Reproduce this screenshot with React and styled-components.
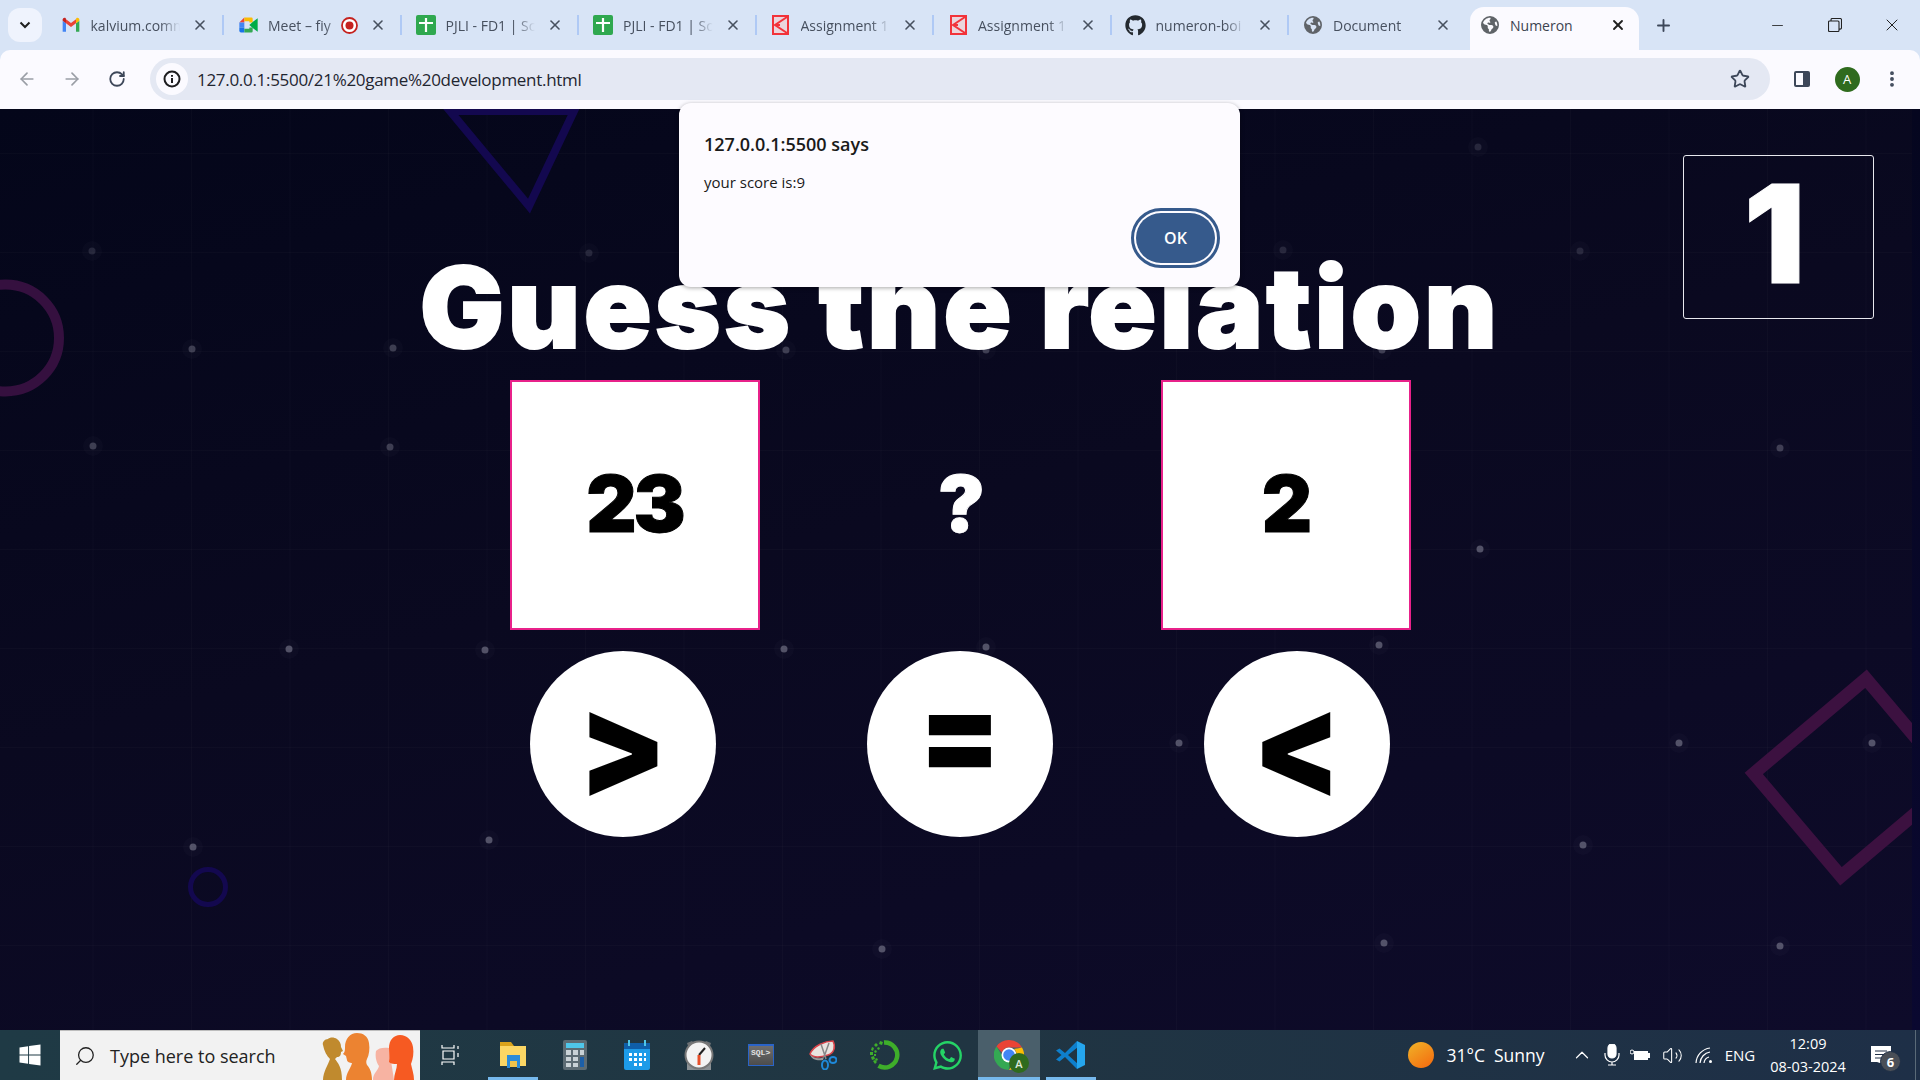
import styled, { createGlobalStyle } from "styled-components"
import { ArrowLeft, ArrowRight, RotateCw, Star, EllipsisVertical, X, Plus, Minus, Search, ChevronUp, Volume2 } from "lucide-react"
import { FaGithub, FaWindows, FaWhatsapp } from "react-icons/fa"
import { FaEarthAmericas } from "react-icons/fa6"

const GlobalStyle = createGlobalStyle`
    html, body {
        margin: 0;
        padding: 0;
        width: 1920px;
        height: 1080px;
        overflow: hidden;
        font-family: "Open Sans", "Noto Sans", sans-serif;
    }
    * { box-sizing: border-box; }
`

const GmailIcon = () => (
    <svg width="20" height="20" viewBox="0 0 24 24">
        <path fill="#4285F4" d="M2 20h4V10L2 7z" />
        <path fill="#34A853" d="M18 20h4V7l-4 3z" />
        <path fill="#EA4335" d="M6 10V5l6 4.5L18 5v5l-6 4.5z" />
        <path fill="#FBBC04" d="M18 5v5l4-3V5.5C22 3.6 19.8 2.5 18.3 3.8z" />
        <path fill="#C5221F" d="M2 7l4 3V5L5.7 3.8C4.2 2.5 2 3.6 2 5.5z" />
    </svg>
)

const MeetIcon = () => (
    <svg width="21" height="20" viewBox="0 0 24 24">
        <path fill="#EA4335" d="M7 3L1 9h6z" />
        <path fill="#FBBC04" d="M7 3h8.5A1.5 1.5 0 0 1 17 4.500V9h-4V7.500H7z" />
        <path fill="#4285F4" d="M1 9h6v6H1z" />
        <path fill="#1A73E8" d="M1 15h6v6H3a2 2 0 0 1-2-2z" />
        <path fill="#34A853" d="M7 21v-4.500h6V15h4v4.500a1.500 1.500 0 0 1-1.500 1.500z" />
        <path fill="#00AC47" d="M13 12l4-3.500 6-4.500v16l-6-4.500z" />
    </svg>
)

const SheetIcon = () => (
    <svg width="20" height="20" viewBox="0 0 20 20">
        <rect width="20" height="20" rx="2" fill="#2FA84F" />
        <path d="M3 8h14M10 3v14" stroke="#fff" strokeWidth="2.200" />
    </svg>
)

const KalviumIcon = () => (
    <svg width="17" height="20" viewBox="0 0 17 20">
        <rect x="1" y="1" width="15" height="18" fill="#EBD5DC" stroke="#F2333A" strokeWidth="2" />
        <path d="M15 2L3 10l12 8M3 10h5" fill="none" stroke="#F2333A" strokeWidth="2" />
    </svg>
)

const RecIcon = () => (
    <svg width="17" height="17" viewBox="0 0 17 17">
        <circle cx="8.500" cy="8.500" r="7.500" fill="#fff" stroke="#C5221F" strokeWidth="1.800" />
        <circle cx="8.500" cy="8.500" r="4" fill="#C5221F" />
    </svg>
)

const tabs = [
    { title: "kalvium.comm", icon: <GmailIcon /> },
    { title: "Meet – fiy", icon: <MeetIcon />, rec: true },
    { title: "PJLI - FD1 | Sc", icon: <SheetIcon /> },
    { title: "PJLI - FD1 | Sc", icon: <SheetIcon /> },
    { title: "Assignment 1", icon: <KalviumIcon /> },
    { title: "Assignment 1", icon: <KalviumIcon /> },
    { title: "numeron-boi", icon: <FaGithub size={21} color="#24292f" /> },
    { title: "Document", icon: <FaEarthAmericas size={18} color="#5f6368" />, noSep: true },
    { title: "Numeron", icon: <FaEarthAmericas size={18} color="#5f6368" />, active: true },
]

const dots = [
    [92, 251], [589, 253], [1283, 250], [1580, 251], [1478, 147], [192, 349], [393, 348], [786, 350], [986, 350], [1382, 350],
    [93, 446], [390, 447], [1780, 448], [1480, 549], [289, 649], [485, 650], [784, 649], [986, 647], [1379, 645],
    [1179, 743], [1679, 743], [1872, 743], [193, 847], [489, 840], [1583, 845], [882, 949], [1384, 943], [1780, 946],
]

const RestoreIcon = () => (
    <svg width="14" height="14" viewBox="0 0 14 14" fill="none" stroke="#222" strokeWidth="1.100">
        <rect x="0.500" y="3" width="10.500" height="10.500" rx="1" />
        <path d="M3 3V1.800A1.300 1.300 0 0 1 4.300 0.500h8A1.300 1.300 0 0 1 13.500 1.800v8a1.300 1.300 0 0 1-1.300 1.300H11" />
    </svg>
)

const PanelIcon = () => (
    <svg width="18" height="18" viewBox="0 0 18 18">
        <rect x="1" y="1" width="16" height="16" rx="2" fill="#3D4759" />
        <rect x="3" y="3" width="7" height="12" fill="#FBFAFF" />
    </svg>
)

const InfoIcon = () => (
    <svg width="18" height="18" viewBox="0 0 18 18">
        <circle cx="9" cy="9" r="7.500" fill="none" stroke="#1d1d1f" strokeWidth="2" />
        <path d="M9 8v5M9 5v1.800" stroke="#1d1d1f" strokeWidth="2" />
    </svg>
)

const People = () => (
    <svg width="98" height="47" viewBox="0 0 98 47">
        <path fill="#C08A2E" d="M3 12c-1-3 2-6 5-6 2-2 6-2 9 0 3 2 4 5 4 8l2 4-2 1c0 3-1 5-4 5l-2 2c3 4 7 8 7 21H3c0-8 5-15 7-21-3-3-6-8-7-14z" />
        <path fill="#F7B3A2" d="M56 18c2-3 8-4 13-3l5 32H53c0-7 5-9 6-14-3-4-4-10-3-15z" />
        <path fill="#EC8331" d="M25 14c0-8 5-14 12-14 6 0 11 3 12 10 1 6 0 12-2 16-1 2-1 4 0 6 3 3 5 8 5 15H26c0-7 5-12 6-17-2 0-5-1-5-3l-1-4-3-2c2-2 2-4 2-7z" />
        <path fill="#F65A22" d="M69 15c0-8 5-13 11-13 7 0 12 5 13 12 1 6 0 12-2 17 1 5 3 10 3 16H74c0-6 3-11 3-16-3 0-6 0-8-2 1-5 0-9 0-14z" />
    </svg>
)

const FolderIcon = () => (
    <svg width="28" height="30" viewBox="0 0 28 30">
        <path fill="#D9A21B" d="M1 2h11l3 4h12v6H1z" />
        <path fill="#FBD664" d="M1 6h26v20H1z" />
        <path fill="#2B8BD8" d="M8 15h13v13h-3v-7h-7v7H8z" />
        <path fill="#F1C34A" d="M11 21h7v6h-7z" />
    </svg>
)

const CalcIcon = () => (
    <svg width="24" height="30" viewBox="0 0 24 30">
        <rect width="24" height="30" rx="2" fill="#5C6B73" />
        <rect x="3" y="3" width="18" height="5" fill="#4FC6E9" />
        <path fill="#C9D2D6" d="M3 10h5v5H3zM10 10h5v5h-5zM17 10h4v5h-4zM3 17h5v4H3zM10 17h5v4h-5zM3 23h5v4H3zM10 23h5v4h-5z" />
        <rect x="17" y="17" width="4" height="10" fill="#1C5FA8" />
    </svg>
)

const CalendarIcon = () => (
    <svg width="26" height="30" viewBox="0 0 26 30">
        <path fill="#1D9BE8" d="M0 9h26v19a2 2 0 0 1-2 2H2a2 2 0 0 1-2-2z" />
        <path fill="#0F5EA8" d="M0 3h26v6H0z" />
        <path fill="#4FC6E9" d="M4 0h2v6H4zM20 0h2v6h-2z" />
        <path fill="#fff" d="M5 13h3v3H5zM10 13h3v3h-3zM15 13h3v3h-3zM20 13h2v3h-2zM5 18h3v3H5zM10 18h3v3h-3zM15 18h3v3h-3zM20 18h2v3h-2zM10 23h3v3h-3zM15 23h3v3h-3z" />
    </svg>
)

const ClockIcon = () => (
    <svg width="30" height="30" viewBox="0 0 30 30">
        <path fill="#6b7074" d="M3 3l5-2 3 3-6 5zM27 3l-5-2-3 3 6 5z" />
        <path fill="#8a9094" d="M3 18h24v12H3z" />
        <circle cx="15" cy="15" r="13.500" fill="#F3F3F3" stroke="#777" strokeWidth="2" />
        <path d="M15 15l6-7" stroke="#222" strokeWidth="2" />
        <path d="M15 15v10" stroke="#E8502A" strokeWidth="3" />
    </svg>
)

const SqlIcon = () => (
    <SqlBox>SQL&gt;</SqlBox>
)

const SnipIcon = () => (
    <svg width="28" height="30" viewBox="0 0 28 30">
        <path fill="#E9E4DF" stroke="#D9444A" strokeWidth="1.500" d="M1 14C4 6 16 1 24 1c3 6 1 12-5 14S5 19 1 14z" />
        <path fill="#9a9a9a" d="M1 14c3 5 10 5 14 3l-1 3c-5 1-12 0-13-6z" />
        <path d="M12 4l5 15M20 3l-5 14" stroke="#888" strokeWidth="1.500" />
        <ellipse cx="16" cy="25" rx="3" ry="4.500" fill="none" stroke="#1E88D9" strokeWidth="2" />
        <ellipse cx="24" cy="20" rx="3.500" ry="3" fill="none" stroke="#1E88D9" strokeWidth="2" />
    </svg>
)

const RingIcon = () => (
    <svg width="30" height="30" viewBox="0 0 30 30">
        <path d="M14 2.500a12.500 12.500 0 1 1-5.500 23.300" fill="none" stroke="#3EAE2A" strokeWidth="4.500" />
        <path fill="#3EAE2A" d="M10 1l3 1-1 3-3-1zM6 3l2 2-2 2-2-2zM8 7l2 1-1 2-2-1zM2 7l2 1-1 3-2-1zM5 10l2 1-1 2-2-1zM0 12l3 0v3H0zM4 14l2 0v2H4zM1 17l3-1 1 3-3 1zM6 18l2 1-1 2-2-1zM3 21l2-1 2 2-2 2z" />
    </svg>
)

const CodeIcon = () => (
    <svg width="30" height="30" viewBox="0 0 30 30">
        <path fill="#0E7FCC" d="M21 1L9 13 3.500 8.500 0 10.500 5.500 15 0 19.500l3.500 2L9 17l12 12 1-5-10-9 10-8z" />
        <path fill="#25A6EE" d="M21 1l8 4v20l-8 4z" />
    </svg>
)

const ChromeIcon = () => (
    <ChromeWrap>
        <svg width="30" height="30" viewBox="0 0 30 30">
            <path fill="#EA4335" d="M15 0a15 15 0 0 1 13 7.500H15a7.500 7.500 0 0 0-7 5L2.500 6.500A15 15 0 0 1 15 0z" />
            <path fill="#FBBC04" d="M28 7.500A15 15 0 0 1 15 30l6.500-11.200A7.500 7.500 0 0 0 20 9z" />
            <path fill="#34A853" d="M2.500 6.500L8 15.500a7.500 7.500 0 0 0 9 6L14.500 30A15 15 0 0 1 2.500 6.500z" />
            <circle cx="15" cy="15" r="7.500" fill="#fff" />
            <circle cx="15" cy="15" r="5.800" fill="#4285F4" />
        </svg>
        <ChromeBadge>A</ChromeBadge>
    </ChromeWrap>
)

const taskItems = [
    { key: "view", icon: <svg width="20" height="20" viewBox="0 0 20 20" fill="none" stroke="#fff" strokeWidth="1.200"><path d="M1 0v3h12V0M1 20v-3h12v3M2 6h11v8H2zM17 1v3M17 8v4" /></svg> },
    { key: "files", icon: <FolderIcon />, line: true },
    { key: "calc", icon: <CalcIcon /> },
    { key: "cal", icon: <CalendarIcon /> },
    { key: "clock", icon: <ClockIcon /> },
    { key: "sql", icon: <SqlIcon /> },
    { key: "snip", icon: <SnipIcon /> },
    { key: "ring", icon: <RingIcon /> },
    { key: "whatsapp", icon: <FaWhatsapp size={33} color="#25D366" /> },
    { key: "chrome", icon: <ChromeIcon />, line: true, active: true },
    { key: "code", icon: <CodeIcon />, line: true },
]

export default function App() {
    return (
        <>
            <GlobalStyle />
            <Screen>
                <TabStrip>
                    <TabSearch><ChevronIcon /></TabSearch>
                    {tabs.map((tab, i) => (
                        <Tab key={i} $active={tab.active} $noSep={tab.noSep}>
                            <Favicon>{tab.icon}</Favicon>
                            <TabTitle $active={tab.active}>{tab.title}</TabTitle>
                            {tab.rec && <RecIcon />}
                            <TabClose><X size={16} strokeWidth={tab.active ? 2.8 : 2.4} color={tab.active ? "#1f1f1f" : "#47505f"} /></TabClose>
                        </Tab>
                    ))}
                    <NewTab><Plus size={19} strokeWidth={2.4} color="#3d4759" /></NewTab>
                    <WindowControls>
                        <WindowButton><Minus size={17} strokeWidth={1.2} color="#222" /></WindowButton>
                        <WindowButton><RestoreIcon /></WindowButton>
                        <WindowButton><X size={20} strokeWidth={1.2} color="#222" /></WindowButton>
                    </WindowControls>
                </TabStrip>
                <Toolbar>
                    <NavButton><ArrowLeft size={20} color="#9a9ea6" /></NavButton>
                    <NavButton><ArrowRight size={20} color="#9a9ea6" /></NavButton>
                    <NavButton><RotateCw size={18} strokeWidth={2.4} color="#3d4759" /></NavButton>
                    <Omnibox>
                        <InfoChip><InfoIcon /></InfoChip>
                        <Url>127.0.0.1:5500/21%20game%20development.html</Url>
                        <StarSlot><Star size={20} strokeWidth={2.2} color="#3d4759" /></StarSlot>
                    </Omnibox>
                    <ToolActions>
                        <NavButton><PanelIcon /></NavButton>
                        <NavButton><Avatar>A</Avatar></NavButton>
                        <NavButton><EllipsisVertical size={20} strokeWidth={2.6} color="#3d4759" /></NavButton>
                    </ToolActions>
                </Toolbar>

                <Page>
                    <Backdrop width="1920" height="922" viewBox="0 108 1920 922">
                        <polygon points="450,111 574,111 529,206" fill="none" stroke="#13084f" strokeWidth="8" />
                        <circle cx="5.500" cy="338" r="53.500" fill="none" stroke="#35103f" strokeWidth="10" />
                        <circle cx="208" cy="887" r="17.500" fill="none" stroke="#13084f" strokeWidth="5" />
                        <polygon points="1866,678.700 1753.800,773.400 1841,876.300 1953,781.600" fill="none" stroke="#3c1140" strokeWidth="13" />
                        {dots.map(([x, y], i) => (
                            <g key={i}>
                                <circle cx={x} cy={y} r="10" fill="#ffffff" opacity="0.02" />
                                <circle cx={x} cy={y} r="3.500" fill="#8a8a9c" opacity={y < 300 ? 0.22 : y < 460 ? 0.4 : 0.55} />
                            </g>
                        ))}
                    </Backdrop>
                    <EdgeStrip />

                    <Heading>
                        <Title>Guess the relation</Title>
                        <ScoreBox>1</ScoreBox>
                    </Heading>
                    <NumberRow>
                        <NumberCard>23</NumberCard>
                        <Mystery>?</Mystery>
                        <NumberCard>2</NumberCard>
                    </NumberRow>
                    <ChoiceRow>
                        <Choice><Glyph $sx={1.09} $sy={1.2}>&gt;</Glyph></Choice>
                        <Choice><Glyph $sy={1.08} $dy={-11}>=</Glyph></Choice>
                        <Choice><Glyph $sx={1.09} $sy={1.2}>&lt;</Glyph></Choice>
                    </ChoiceRow>
                </Page>

                <AlertBox>
                    <AlertTitle>127.0.0.1:5500 says</AlertTitle>
                    <AlertMessage>your score is:9</AlertMessage>
                    <AlertActions><OkButton>OK</OkButton></AlertActions>
                </AlertBox>

                <Taskbar>
                    <StartButton><FaWindows size={24} color="#fff" /></StartButton>
                    <SearchBox>
                        <SearchGlass><Search size={22} strokeWidth={1.4} color="#222" /></SearchGlass>
                        <SearchText>Type here to search</SearchText>
                        <PeopleSlot><People /></PeopleSlot>
                    </SearchBox>
                    {taskItems.map((item) => (
                        <TaskButton key={item.key} $line={item.line} $active={item.active}>{item.icon}</TaskButton>
                    ))}
                    <Tray>
                        <Sun />
                        <TrayText $w={47.500}>31°C</TrayText>
                        <TrayText $w={72}>Sunny</TrayText>
                        <TraySlot $w={32}><ChevronUp size={22} strokeWidth={1.3} color="#fff" /></TraySlot>
                        <TraySlot $w={28}>
                            <svg width="16" height="22" viewBox="0 0 16 22" fill="none" stroke="#fff" strokeWidth="1.200"><rect x="4" y="0" width="8" height="14" rx="4" fill="#fff" /><path d="M1 9v2a7 7 0 0 0 14 0V9M8 18v3M4 21h8" /></svg>
                        </TraySlot>
                        <TraySlot $w={28}>
                            <svg width="20" height="12" viewBox="0 0 20 12"><rect x="4" y="2" width="14" height="9" fill="#fff" /><rect x="18" y="4" width="2" height="5" fill="#fff" /><circle cx="2" cy="3" r="2" fill="none" stroke="#fff" /></svg>
                        </TraySlot>
                        <TraySlot $w={36}><Volume2 size={21} strokeWidth={1.200} color="#fff" /></TraySlot>
                        <TraySlot $w={28}>
                            <svg width="18" height="18" viewBox="0 0 18 18" fill="none" stroke="#fff" strokeWidth="1.200"><path d="M1 17A16 16 0 0 1 15 2M5 17A12 12 0 0 1 15 6M9 17a7 7 0 0 1 5-6" /><circle cx="15.500" cy="15.500" r="1.500" fill="#fff" stroke="none" /></svg>
                        </TraySlot>
                        <TrayText $w={44} $small>ENG</TrayText>
                        <Clock>
                            <span>12:09</span>
                            <span>08-03-2024</span>
                        </Clock>
                        <NotifySlot>
                            <svg width="20" height="18" viewBox="0 0 20 18"><path fill="#fff" d="M0 0h20v17H9l-3-1H0z" /><path d="M4 5h12M4 8.500h12M4 12h8" stroke="#1f2f46" strokeWidth="1.200" /></svg>
                            <NotifyBadge>6</NotifyBadge>
                        </NotifySlot>
                        <DesktopEdge />
                    </Tray>
                </Taskbar>
            </Screen>
        </>
    )
}

const ChevronIcon = () => (
    <svg width="12" height="8" viewBox="0 0 12 8"><path d="M1.500 1.500L6 6l4.500-4.500" fill="none" stroke="#1f1f1f" strokeWidth="2" /></svg>
)

const Screen = styled.div`
    position: relative;
    width: 1920px;
    height: 1080px;
    display: flex;
    flex-direction: column;
    overflow: hidden;
    background-color: #D8E4F6;
`

const TabStrip = styled.div`
    height: 50px;
    flex: none;
    display: flex;
    align-items: flex-end;
    padding-left: 8px;
    color: #47505f;
`

const TabSearch = styled.div`
    width: 34px;
    height: 34px;
    margin: 0 4.500px 8px 0;
    display: flex;
    align-items: center;
    justify-content: center;
    border-radius: 12px;
    background-color: #EFF3FD;
`

const Tab = styled.div`
    position: relative;
    flex: none;
    width: ${(p) => (p.$active ? "169px" : "177.500px")};
    height: 43px;
    margin-left: ${(p) => (p.$active ? "3.500px" : "0")};
    padding: ${(p) => (p.$active ? "0 13px 7px 8px" : "0 16px 7px 12px")};
    display: flex;
    align-items: center;
    border-radius: 14px 14px 0 0;
    background-color: ${(p) => (p.$active ? "#FBFAFF" : "transparent")};

    &::after {
        content: "";
        display: ${(p) => (p.$active || p.$noSep ? "none" : "block")};
        position: absolute;
        right: 0;
        top: 8px;
        width: 2px;
        height: 20px;
        background-color: #AFC9F5;
    }
`

const Favicon = styled.span`
    flex: none;
    width: 24px;
    margin-right: 8px;
    display: flex;
    align-items: center;
    justify-content: center;
`

const TabTitle = styled.span`
    flex: 1;
    min-width: 0;
    white-space: nowrap;
    overflow: hidden;
    font-size: 14px;
    color: ${(p) => (p.$active ? "#3c4350" : "#47505f")};
    mask-image: ${(p) => (p.$active ? "none" : "linear-gradient(to right, #000 78%, transparent 100%)")};
`

const TabClose = styled.span`
    flex: none;
    width: 16px;
    margin-left: 12px;
    display: flex;
`

const NewTab = styled.div`
    width: 24px;
    height: 50px;
    margin-left: 12px;
    display: flex;
    align-items: center;
    justify-content: center;
`

const WindowControls = styled.div`
    height: 50px;
    margin-left: auto;
    display: flex;
`

const WindowButton = styled.div`
    width: 57px;
    display: flex;
    align-items: center;
    justify-content: center;
`

const Toolbar = styled.div`
    height: 59px;
    flex: none;
    display: flex;
    align-items: center;
    padding: 0 0 1px 4.500px;
    background-color: #FBFAFF;
    border-radius: 10px 10px 0 0;
`

const NavButton = styled.div`
    width: 45px;
    display: flex;
    align-items: center;
    justify-content: center;
`

const Omnibox = styled.div`
    width: 1620px;
    height: 42px;
    margin-left: 10.500px;
    padding: 0 20px 0 6px;
    display: flex;
    align-items: center;
    border-radius: 21px;
    background-color: #E4E8F3;
`

const InfoChip = styled.div`
    width: 32px;
    height: 32px;
    display: flex;
    align-items: center;
    justify-content: center;
    border-radius: 50%;
    background-color: #FBFAFF;
`

const Url = styled.span`
    margin-left: 9px;
    font-size: 17px;
    color: #1f2530;
    letter-spacing: -0.3px;
`

const StarSlot = styled.span`
    margin-left: auto;
    display: flex;
`

const ToolActions = styled.div`
    margin-left: 9.500px;
    display: flex;
`

const Avatar = styled.div`
    width: 25px;
    height: 25px;
    display: flex;
    align-items: center;
    justify-content: center;
    border-radius: 50%;
    background-color: #2F6B1E;
    color: #fff;
    font-size: 13px;
`

const Page = styled.main`
    position: relative;
    flex: none;
    width: 1920px;
    height: 921px;
    padding-top: 46px;
    overflow: hidden;
    background-color: #0b0a26;
    background-image:
        linear-gradient(rgba(255, 255, 255, 0.018) 1px, transparent 1px),
        linear-gradient(90deg, rgba(255, 255, 255, 0.018) 1px, transparent 1px),
        linear-gradient(165deg, #04061a 0%, #0a0920 45%, #0e0b2a 100%);
    background-size: 98.500px 99px, 98.500px 99px, 100% 100%;
    background-position: -6px 44px, -6px 44px, 0 0;
`

const Backdrop = styled.svg`
    position: absolute;
    top: -1px;
    left: 0;
`

const EdgeStrip = styled.div`
    position: absolute;
    top: 0;
    right: 0;
    width: 8px;
    height: 100%;
    background: linear-gradient(#05061f, #0a0830);
`

const Heading = styled.header`
    position: relative;
    height: 225px;
    display: grid;
    grid-template-columns: 1fr auto 1fr;
`

const Title = styled.h1`
    grid-column: 2;
    align-self: end;
    margin: 0 0 17px;
    font-family: Inter, "Liberation Sans", sans-serif;
    font-size: 112px;
    line-height: 112px;
    font-weight: 900;
    letter-spacing: 3.300px;
    -webkit-text-stroke: 2px #fff;
    color: #fff;
    white-space: nowrap;
`

const ScoreBox = styled.div`
    grid-column: 3;
    justify-self: end;
    align-self: start;
    width: 191px;
    height: 164px;
    margin-right: 46px;
    padding: 0 8px 8px 0;
    display: flex;
    align-items: center;
    justify-content: center;
    border: 1.500px solid #E8E8EE;
    border-radius: 3px;
    font-family: Inter, "Liberation Sans", sans-serif;
    font-size: 136px;
    font-weight: 900;
    -webkit-text-stroke: 1px #fff;
    color: #fff;
`

const NumberRow = styled.div`
    display: flex;
    justify-content: center;
    gap: 75.500px;
`

const NumberCard = styled.div`
    width: 250px;
    height: 250px;
    padding-bottom: 3px;
    display: flex;
    align-items: center;
    justify-content: center;
    border: 2.500px solid #E8218A;
    background-color: #fff;
    color: #000;
    font-family: Inter, "Liberation Sans", sans-serif;
    font-size: 78px;
    font-weight: 900;
    letter-spacing: -3px;
    -webkit-text-stroke: 1px currentColor;
`

const Mystery = styled(NumberCard)`
    border: none;
    background: none;
    color: #fff;
`

const ChoiceRow = styled.div`
    margin-top: 21px;
    display: flex;
    justify-content: center;
    gap: 151px;
`

const Choice = styled.div`
    width: 186px;
    height: 186px;
    display: flex;
    align-items: center;
    justify-content: center;
    border-radius: 50%;
    background-color: #fff;
    color: #000;
    font-family: Inter, "Liberation Sans", sans-serif;
    font-size: 118px;
    font-weight: 900;
`

const Glyph = styled.span`
    display: block;
    transform: translateY(${(p) => p.$dy || 0}px) scale(${(p) => p.$sx || 1}, ${(p) => p.$sy || 1});
`

const AlertBox = styled.div`
    position: absolute;
    top: 103px;
    left: 679px;
    width: 561px;
    height: 184px;
    padding: 29px 21px 20px 25px;
    display: flex;
    flex-direction: column;
    border-radius: 12px;
    background-color: #FDFBFF;
    box-shadow: 0 1px 4px rgba(0, 0, 0, 0.35);
    color: #1a1a1a;
`

const AlertTitle = styled.div`
    font-size: 18px;
    font-weight: 600;
    line-height: 24px;
`

const AlertMessage = styled.div`
    margin-top: 16px;
    font-size: 15px;
    line-height: 20px;
`

const AlertActions = styled.div`
    margin-top: auto;
    display: flex;
    justify-content: flex-end;
`

const OkButton = styled.div`
    width: 79px;
    height: 50px;
    margin: 4px;
    display: flex;
    align-items: center;
    justify-content: center;
    border-radius: 25px;
    background-color: #365A8C;
    color: #fff;
    font-size: 16px;
    font-weight: 600;
    outline: 3px solid #365A8C;
    outline-offset: 2px;
`

const Taskbar = styled.footer`
    flex: none;
    height: 50px;
    display: flex;
    background: linear-gradient(90deg, #1F3A45, #203542 50%, #1E2F47);
`

const StartButton = styled.div`
    width: 60px;
    display: flex;
    align-items: center;
    justify-content: center;
`

const SearchBox = styled.div`
    width: 360px;
    display: flex;
    align-items: center;
    border-top: 1px solid #bdbdbd;
    background-color: #F2F2F2;
`

const SearchGlass = styled.span`
    margin-left: 14px;
    display: flex;
    transform: scaleX(-1);
`

const SearchText = styled.span`
    margin-left: 14px;
    font-size: 18px;
    color: #222;
`

const PeopleSlot = styled.span`
    margin-left: auto;
    align-self: flex-end;
    display: flex;
    margin-right: 2px;
`

const TaskButton = styled.div`
    position: relative;
    width: 62px;
    display: flex;
    align-items: center;
    justify-content: center;
    background-color: ${(p) => (p.$active ? "#4A5F6B" : "transparent")};

    &::after {
        content: "";
        display: ${(p) => (p.$line ? "block" : "none")};
        position: absolute;
        bottom: 0;
        left: ${(p) => (p.$active ? "0" : "6px")};
        right: ${(p) => (p.$active ? "0" : "6px")};
        height: 3px;
        background-color: #76B9ED;
    }
`

const SqlBox = styled.div`
    width: 26px;
    height: 22px;
    padding: 2px 0 0 2px;
    border: 1px solid #2A64C8;
    border-top-width: 2px;
    background: linear-gradient(#6e6e6e, #4c4c4c);
    color: #e2e2e2;
    font-family: "Liberation Mono", monospace;
    font-size: 8px;
    font-weight: 700;
`

const ChromeWrap = styled.div`
    position: relative;
    width: 30px;
    height: 30px;
`

const ChromeBadge = styled.span`
    position: absolute;
    right: -5px;
    bottom: -3px;
    width: 20px;
    height: 20px;
    display: flex;
    align-items: center;
    justify-content: center;
    border-radius: 50%;
    background-color: #2F6B1E;
    color: #dfe8da;
    font-size: 11px;
    font-weight: 600;
`

const Tray = styled.div`
    margin-left: auto;
    display: flex;
    align-items: center;
    color: #fff;
`

const Sun = styled.span`
    width: 26px;
    height: 26px;
    margin-right: 12.500px;
    border-radius: 50%;
    background: linear-gradient(145deg, #F0B428, #F4670E);
`

const TrayText = styled.span`
    width: ${(p) => p.$w}px;
    font-size: ${(p) => (p.$small ? "15px" : "17.500px")};
    text-align: ${(p) => (p.$small ? "center" : "left")};
    white-space: nowrap;
`

const TraySlot = styled.span`
    width: ${(p) => p.$w}px;
    display: flex;
    align-items: center;
    justify-content: center;
`

const Clock = styled.div`
    width: 92px;
    display: flex;
    flex-direction: column;
    align-items: center;
    gap: 3px;
    font-size: 14.500px;
    line-height: 20px;
`

const NotifySlot = styled.div`
    position: relative;
    width: 53px;
    display: flex;
    justify-content: center;
`

const NotifyBadge = styled.span`
    position: absolute;
    left: 26px;
    top: 5px;
    width: 21px;
    height: 21px;
    display: flex;
    align-items: center;
    justify-content: center;
    border-radius: 50%;
    border: 1px solid #1f2f46;
    background-color: #4a4f57;
    color: #fff;
    font-size: 13px;
    font-weight: 700;
`

const DesktopEdge = styled.span`
    align-self: stretch;
    width: 1px;
    margin: 0 4px 0 8px;
    background-color: #5a6a78;
`
